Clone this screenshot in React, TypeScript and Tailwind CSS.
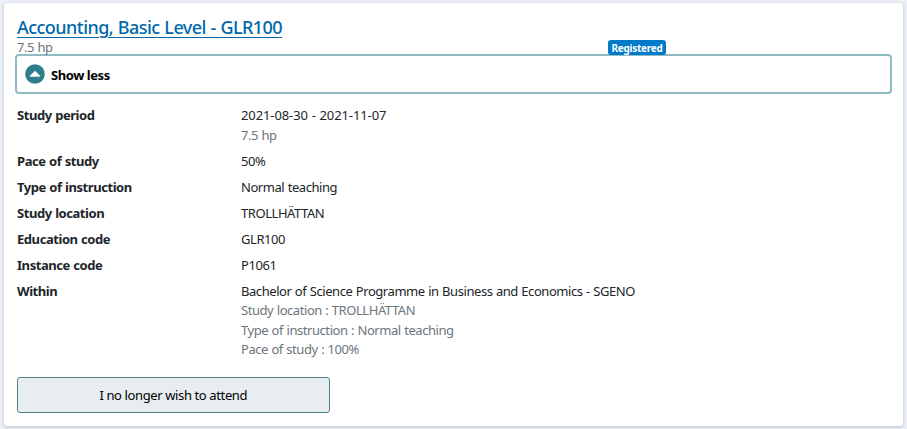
import { useState } from "react";
import clsx from "clsx";

type Row = {
  label: string;
  value: string;
  details?: string[];
};

const rows: Row[] = [
  { label: "Study period", value: "2021-08-30 - 2021-11-07", details: ["7.5 hp"] },
  { label: "Pace of study", value: "50%" },
  { label: "Type of instruction", value: "Normal teaching" },
  { label: "Study location", value: "TROLLHÄTTAN" },
  { label: "Education code", value: "GLR100" },
  { label: "Instance code", value: "P1061" },
  {
    label: "Within",
    value: "Bachelor of Science Programme in Business and Economics - SGENO",
    details: [
      "Study location : TROLLHÄTTAN",
      "Type of instruction : Normal teaching",
      "Pace of study : 100%",
    ],
  },
];

function ToggleIcon({ open }: { open: boolean }) {
  return (
    <svg viewBox="0 0 20 20" className={clsx("h-5 w-5", !open && "rotate-180")}>
      <circle cx="10" cy="10" r="9.8" fill="#2f7f8c" />
      <path d="M10 6.8 L14.8 11.6 Q15.3 12.8 14.2 12.8 H5.8 Q4.7 12.8 5.2 11.6 Z" fill="#fff" />
    </svg>
  );
}

export default function App() {
  const [open, setOpen] = useState(true);

  return (
    <div className="h-[429px] overflow-hidden bg-[#edf0f8] pt-[3px] pr-1 pl-1 font-['Noto_Sans','Open_Sans',sans-serif] text-[13px] leading-[19.5px] tracking-[-0.44px] [word-spacing:0.5px] text-[#212529]">
      <div className="h-[423px] rounded-[3px] bg-white px-[13px] shadow-[0_1px_3px_1px_#cdd1d7]">
        {/* title */}
        <div className="flex h-[35px] items-end">
          <a href="#" className="pt-px text-[18px] leading-[22px] font-medium tracking-[-0.54px] text-[#0067ab] underline decoration-1 underline-offset-[3px]">
            Accounting, Basic Level - GLR100
          </a>
        </div>

        {/* credits and status */}
        <div className="flex h-4">
          <div className="w-[591px] text-[#6c757d]">7.5 hp</div>
          <span className="mt-[2px] h-[15px] w-[58px] rounded-[3px] bg-[#007ac9] pt-px text-center text-[10px] leading-[15px] font-bold tracking-[-0.25px] text-white">
            Registered
          </span>
        </div>

        {/* toggle */}
        <button
          onClick={() => setOpen(!open)}
          className="-mx-[2px] flex h-10 w-[877px] items-center gap-[6px] rounded-[4px] border-2 border-[#8fbbc3] bg-white pl-2 font-bold text-black"
        >
          <ToggleIcon open={open} />
          <span className="pt-[3px]">{open ? "Show less" : "Show more"}</span>
        </button>

        {open && (
          <>
            <dl className="mt-3 flex flex-col gap-[6.5px]">
              {rows.map((row) => (
                <div key={row.label} className="flex">
                  <dt className="w-[224px] font-bold">{row.label}</dt>
                  <dd>
                    <div className={clsx(row.label === "Study period" && "tracking-[-0.1px]")}>{row.value}</div>
                    {row.details?.map((detail) => (
                      <div key={detail} className="text-[#6c757d]">{detail}</div>
                    ))}
                  </dd>
                </div>
              ))}
            </dl>

            <button className="mt-[17px] h-9 w-[312.5px] rounded-[3px] border border-[#4f8489] bg-[#e7edf0] pt-[3px] tracking-[-0.38px] text-black">
              I no longer wish to attend
            </button>
          </>
        )}
      </div>
    </div>
  );
}
